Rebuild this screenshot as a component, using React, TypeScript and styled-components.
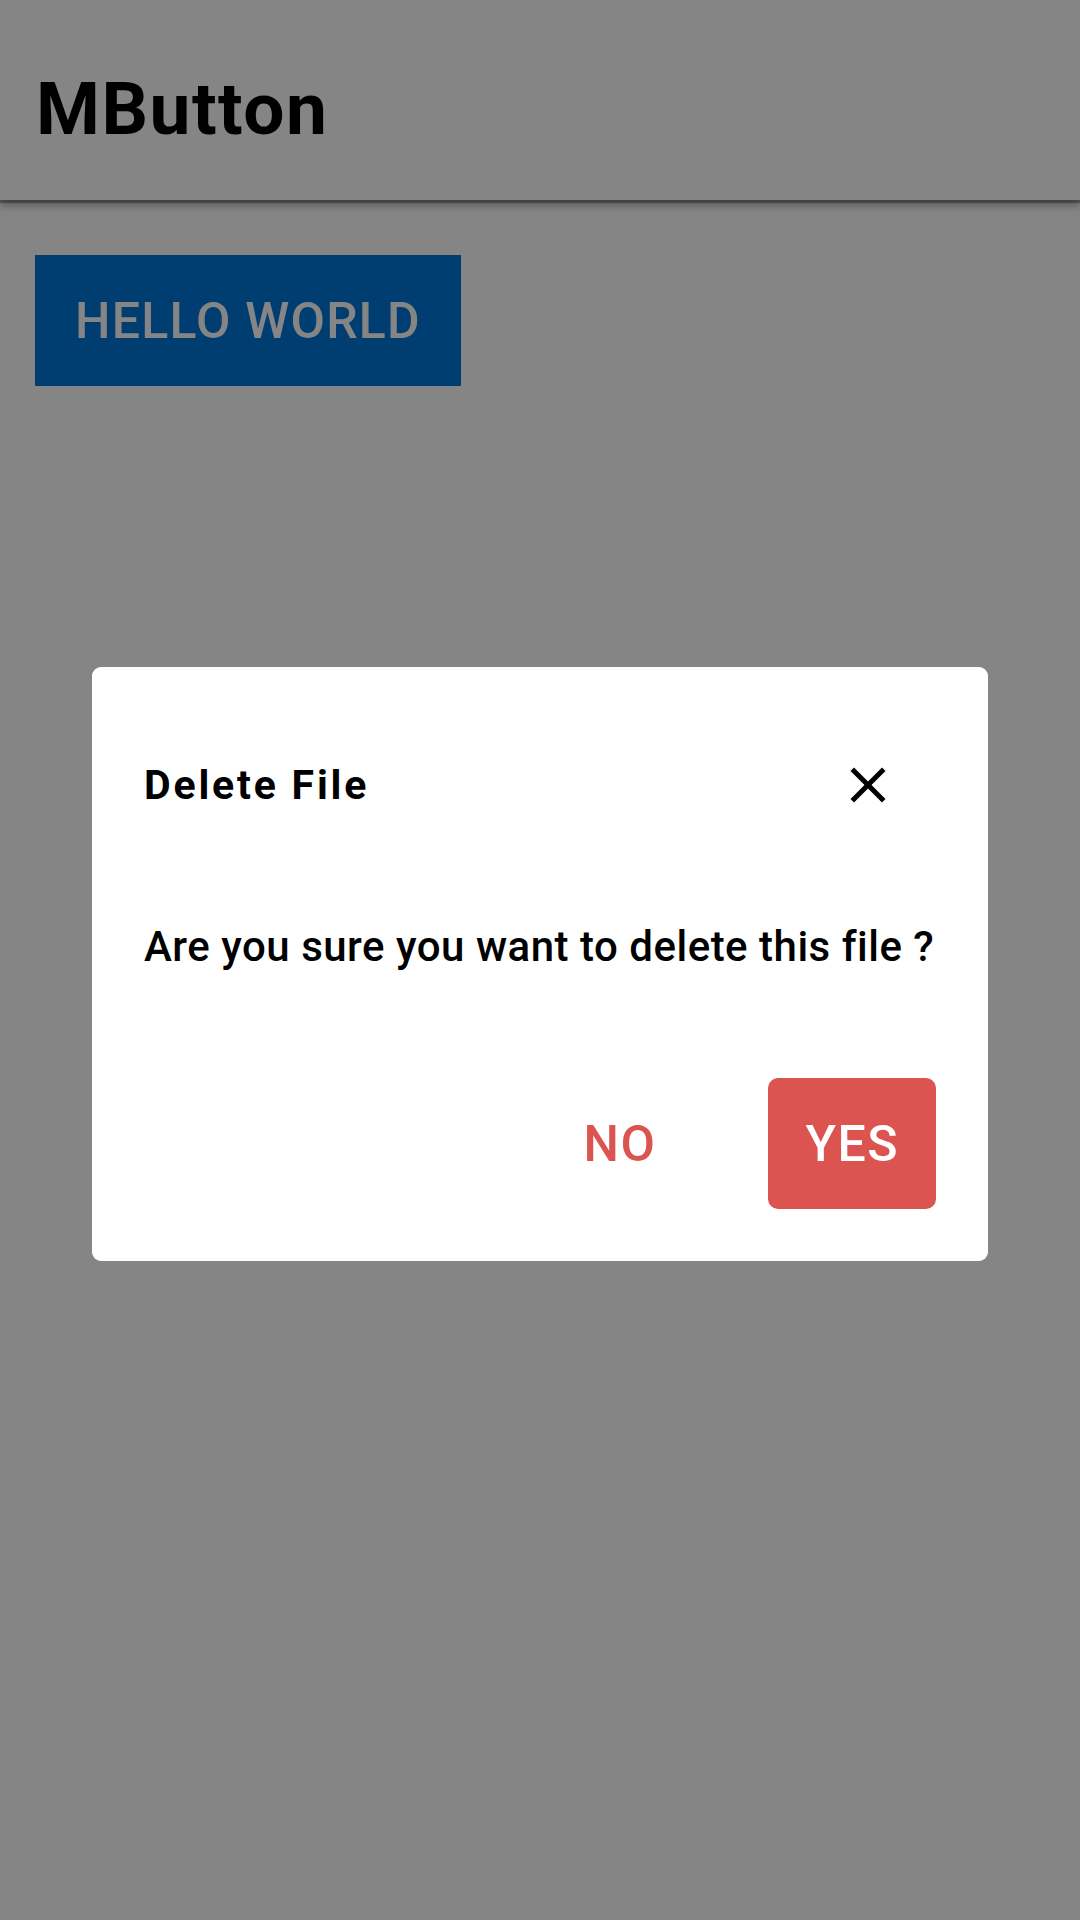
import styled, { createGlobalStyle } from "styled-components";

const GlobalStyle = createGlobalStyle`
  html, body {
    margin: 0;
    padding: 0;
    background: #ffffff;
  }
  body {
    font-family: Roboto, "Liberation Sans", sans-serif;
  }
`;

const StyledPage = styled.div`
  position: relative;
  width: 1080px;
  height: 1920px;
  background: #ffffff;
  overflow: hidden;
`;

const StyledAppBar = styled.header`
  position: relative;
  height: 200px;
  background: #ffffff;
  display: flex;
  align-items: center;
  padding: 0 36px;
  box-sizing: border-box;
  box-shadow: 0 3px 0 rgba(0, 0, 0, 0.3), 0 6px 8px rgba(0, 0, 0, 0.3);
`;

const StyledTitle = styled.h1`
  margin: 0;
  padding-top: 18px;
  font-size: 73px;
  font-weight: 700;
  letter-spacing: 1.5px;
  color: #000000;
`;

const StyledContent = styled.main`
  padding: 55px 35px;
`;

const StyledBlockButton = styled.button`
  width: 426px;
  height: 131px;
  border: none;
  background: #0075d9;
  color: #ffffff;
  font-family: Roboto, "Liberation Sans", sans-serif;
  font-size: 50px;
  font-weight: 500;
  letter-spacing: 1.2px;
  text-transform: uppercase;
  padding: 0;
`;

const StyledOverlay = styled.div`
  position: absolute;
  inset: 0;
  background: rgba(0, 0, 0, 0.48);
  display: flex;
  align-items: flex-start;
  justify-content: center;
  padding-top: 667px;
  box-sizing: border-box;
`;

const StyledDialog = styled.div`
  width: 896px;
  background: #ffffff;
  border-radius: 9px;
  padding: 52px;
  box-sizing: border-box;
  display: flex;
  flex-direction: column;
  gap: 107px;
`;

const StyledDialogHeader = styled.div`
  display: flex;
  align-items: center;
  justify-content: space-between;
  height: 60px;
  margin-top: 36px;
`;

const StyledDialogTitle = styled.h2`
  margin: 0;
  font-size: 41px;
  font-weight: 700;
  letter-spacing: 2.8px;
  color: #000000;
`;

const StyledCloseButton = styled.button`
  width: 60px;
  height: 60px;
  padding: 0;
  margin-right: 38px;
  border: none;
  background: transparent;
  display: flex;
  align-items: center;
  justify-content: center;
`;

const StyledMessage = styled.p`
  margin: 0;
  font-size: 42px;
  font-weight: 500;
  letter-spacing: 0.5px;
  color: #000000;
  line-height: 49px;
`;

const StyledActions = styled.div`
  display: flex;
  justify-content: flex-end;
  align-items: center;
  gap: 112px;
`;

const StyledActionButton = styled.button<{ $filled?: boolean }>`
  height: 131px;
  padding: 0 ${(p) => (p.$filled ? "37px" : "0")};
  border: none;
  border-radius: 10px;
  background: ${(p) => (p.$filled ? "#db5450" : "transparent")};
  color: ${(p) => (p.$filled ? "#ffffff" : "#db5450")};
  font-family: Roboto, "Liberation Sans", sans-serif;
  font-size: 50px;
  font-weight: 500;
  letter-spacing: 1.5px;
`;

const CloseIcon = () => (
  <svg width="60" height="60" viewBox="0 0 24 24">
    <path
      fill="#000000"
      d="M19 6.41 17.59 5 12 10.59 6.41 5 5 6.41 10.59 12 5 17.59 6.41 19 12 13.41 17.59 19 19 17.59 13.41 12z"
    />
  </svg>
);

const App = () => {
  return (
    <StyledPage>
      <GlobalStyle />
      <StyledAppBar>
        <StyledTitle>MButton</StyledTitle>
      </StyledAppBar>
      <StyledContent>
        <StyledBlockButton>Hello World</StyledBlockButton>
      </StyledContent>
      <StyledOverlay>
        <StyledDialog>
          <StyledDialogHeader>
            <StyledDialogTitle>Delete File</StyledDialogTitle>
            <StyledCloseButton>
              <CloseIcon />
            </StyledCloseButton>
          </StyledDialogHeader>
          <StyledMessage>Are you sure you want to delete this file ?</StyledMessage>
          <StyledActions>
            <StyledActionButton>NO</StyledActionButton>
            <StyledActionButton $filled>YES</StyledActionButton>
          </StyledActions>
        </StyledDialog>
      </StyledOverlay>
    </StyledPage>
  );
};

export default App;
